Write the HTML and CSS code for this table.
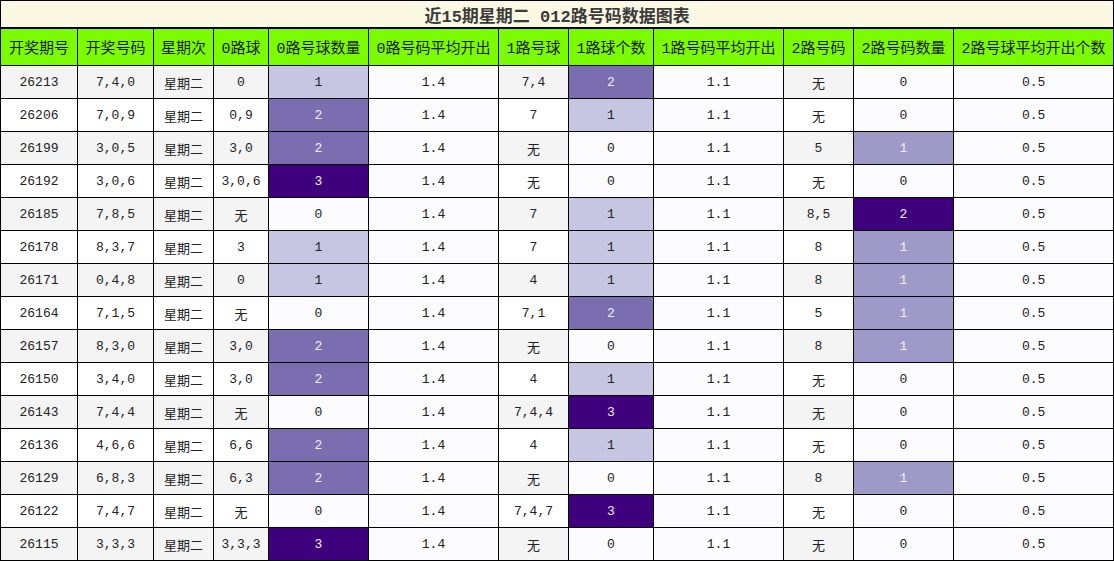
FILE: index.html
```html
<!DOCTYPE html>
<html lang="zh">
<head>
<meta charset="utf-8">
<title>近15期星期二 012路号码数据图表</title>
<link rel="stylesheet" href="styles.css">
</head>
<body>
<table class="chart">
  <colgroup>
    <col class="w77"><col class="w76"><col class="w60"><col class="w55"><col class="w100"><col class="w130">
    <col class="w70"><col class="w85"><col class="w130"><col class="w70"><col class="w100"><col class="w160">
  </colgroup>
  <thead>
    <tr class="title-row"><th colspan="12" class="title">近15期星期二 012路号码数据图表</th></tr>
    <tr class="head-row">
      <th>开奖期号</th><th>开奖号码</th><th>星期次</th><th>0路球</th><th>0路号球数量</th><th>0路号码平均开出</th>
      <th>1路号球</th><th>1路球个数</th><th>1路号码平均开出</th><th>2路号码</th><th>2路号码数量</th><th>2路号球平均开出个数</th>
    </tr>
  </thead>
  <tbody>
    <tr><td>26213</td><td>7,4,0</td><td class="cn">星期二</td><td>0</td><td class="p1">1</td><td class="lt">1.4</td><td>7,4</td><td class="p2">2</td><td class="lt">1.1</td><td class="cn">无</td><td class="lt">0</td><td class="lt">0.5</td></tr>
    <tr><td>26206</td><td>7,0,9</td><td class="cn">星期二</td><td>0,9</td><td class="p2">2</td><td class="lt">1.4</td><td>7</td><td class="p1">1</td><td class="lt">1.1</td><td class="cn">无</td><td class="lt">0</td><td class="lt">0.5</td></tr>
    <tr><td>26199</td><td>3,0,5</td><td class="cn">星期二</td><td>3,0</td><td class="p2">2</td><td class="lt">1.4</td><td class="cn">无</td><td class="lt">0</td><td class="lt">1.1</td><td>5</td><td class="q1">1</td><td class="lt">0.5</td></tr>
    <tr><td>26192</td><td>3,0,6</td><td class="cn">星期二</td><td>3,0,6</td><td class="p3">3</td><td class="lt">1.4</td><td class="cn">无</td><td class="lt">0</td><td class="lt">1.1</td><td class="cn">无</td><td class="lt">0</td><td class="lt">0.5</td></tr>
    <tr><td>26185</td><td>7,8,5</td><td class="cn">星期二</td><td class="cn">无</td><td class="lt">0</td><td class="lt">1.4</td><td>7</td><td class="p1">1</td><td class="lt">1.1</td><td>8,5</td><td class="q2">2</td><td class="lt">0.5</td></tr>
    <tr><td>26178</td><td>8,3,7</td><td class="cn">星期二</td><td>3</td><td class="p1">1</td><td class="lt">1.4</td><td>7</td><td class="p1">1</td><td class="lt">1.1</td><td>8</td><td class="q1">1</td><td class="lt">0.5</td></tr>
    <tr><td>26171</td><td>0,4,8</td><td class="cn">星期二</td><td>0</td><td class="p1">1</td><td class="lt">1.4</td><td>4</td><td class="p1">1</td><td class="lt">1.1</td><td>8</td><td class="q1">1</td><td class="lt">0.5</td></tr>
    <tr><td>26164</td><td>7,1,5</td><td class="cn">星期二</td><td class="cn">无</td><td class="lt">0</td><td class="lt">1.4</td><td>7,1</td><td class="p2">2</td><td class="lt">1.1</td><td>5</td><td class="q1">1</td><td class="lt">0.5</td></tr>
    <tr><td>26157</td><td>8,3,0</td><td class="cn">星期二</td><td>3,0</td><td class="p2">2</td><td class="lt">1.4</td><td class="cn">无</td><td class="lt">0</td><td class="lt">1.1</td><td>8</td><td class="q1">1</td><td class="lt">0.5</td></tr>
    <tr><td>26150</td><td>3,4,0</td><td class="cn">星期二</td><td>3,0</td><td class="p2">2</td><td class="lt">1.4</td><td>4</td><td class="p1">1</td><td class="lt">1.1</td><td class="cn">无</td><td class="lt">0</td><td class="lt">0.5</td></tr>
    <tr><td>26143</td><td>7,4,4</td><td class="cn">星期二</td><td class="cn">无</td><td class="lt">0</td><td class="lt">1.4</td><td>7,4,4</td><td class="p3">3</td><td class="lt">1.1</td><td class="cn">无</td><td class="lt">0</td><td class="lt">0.5</td></tr>
    <tr><td>26136</td><td>4,6,6</td><td class="cn">星期二</td><td>6,6</td><td class="p2">2</td><td class="lt">1.4</td><td>4</td><td class="p1">1</td><td class="lt">1.1</td><td class="cn">无</td><td class="lt">0</td><td class="lt">0.5</td></tr>
    <tr><td>26129</td><td>6,8,3</td><td class="cn">星期二</td><td>6,3</td><td class="p2">2</td><td class="lt">1.4</td><td class="cn">无</td><td class="lt">0</td><td class="lt">1.1</td><td>8</td><td class="q1">1</td><td class="lt">0.5</td></tr>
    <tr><td>26122</td><td>7,4,7</td><td class="cn">星期二</td><td class="cn">无</td><td class="lt">0</td><td class="lt">1.4</td><td>7,4,7</td><td class="p3">3</td><td class="lt">1.1</td><td class="cn">无</td><td class="lt">0</td><td class="lt">0.5</td></tr>
    <tr><td>26115</td><td>3,3,3</td><td class="cn">星期二</td><td>3,3,3</td><td class="p3">3</td><td class="lt">1.4</td><td class="cn">无</td><td class="lt">0</td><td class="lt">1.1</td><td class="cn">无</td><td class="lt">0</td><td class="lt">0.5</td></tr>
  </tbody>
</table>
</body>
</html>
```
FILE: styles.css
```css
html, body {
  margin: 0;
  padding: 0;
  background: #ffffff;
}

.chart {
  border-collapse: collapse;
  table-layout: fixed;
  width: 1114px;
  font-family: "Liberation Mono", "Noto Sans CJK SC", monospace;
  font-size: 13px;
  color: #222222;
}

.w55 { width: 55px; }
.w60 { width: 60px; }
.w70 { width: 70px; }
.w76 { width: 76px; }
.w77 { width: 77px; }
.w85 { width: 85px; }
.w100 { width: 100px; }
.w130 { width: 130px; }
.w160 { width: 160px; }

.chart th,
.chart td {
  border: 1px solid #000000;
  padding: 0;
  text-align: center;
  vertical-align: middle;
  white-space: nowrap;
  overflow: hidden;
}

.title {
  height: 26px;
  background: #fbf8e3;
  border-bottom: 2px solid #000000 !important;
  font-size: 17px;
  font-weight: bold;
  color: #3a3a3a;
}

.head-row th {
  height: 36px;
  background: #7cfc00;
  font-size: 15px;
  font-weight: normal;
  color: #1a1a1a;
}

.chart td {
  height: 32px;
  background: #ffffff;
}

.chart tbody tr:nth-child(odd) td {
  background: #f4f4f4;
}

.chart tbody tr td.lt { background: #fcfbfd; color: #222222; }
.chart tbody tr td.p1 { background: #c6c6e2; color: #222222; }
.chart tbody tr td.p2 { background: #7a6eb1; color: #eeeeee; }
.chart tbody tr td.p3 { background: #3f007d; color: #eeeeee; }
.chart tbody tr td.q1 { background: #9e9ac8; color: #eeeeee; }
.chart tbody tr td.q2 { background: #3f007d; color: #eeeeee; }
```
